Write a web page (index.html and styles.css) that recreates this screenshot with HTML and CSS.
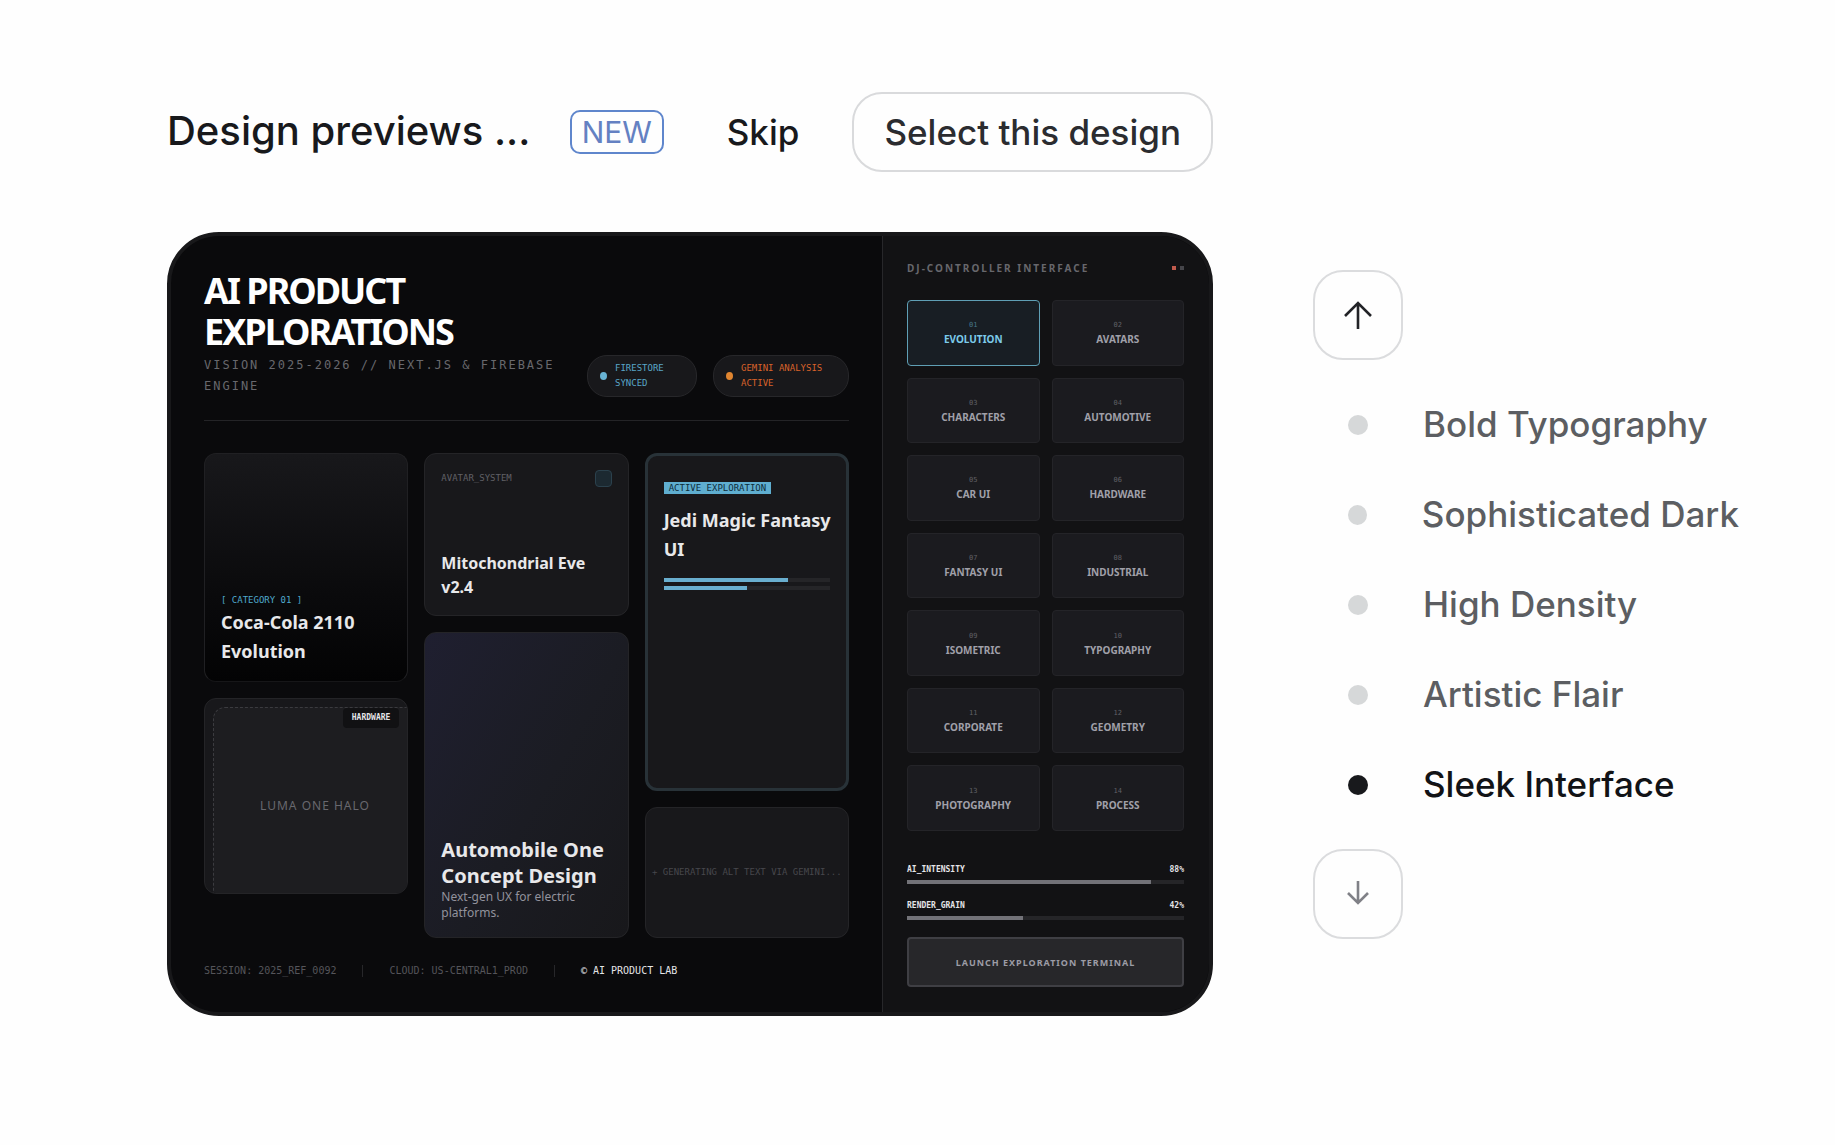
FILE: index.html
```html
<!DOCTYPE html>
<html lang="en">
<head>
<meta charset="utf-8">
<meta name="viewport" content="width=device-width, initial-scale=1">
<title>Design previews</title>
<link rel="stylesheet" href="styles.css">
</head>
<body>
<div class="page">
  <header class="toolbar">
    <h1 class="toolbar-title">Design previews ...</h1>
    <span class="badge">NEW</span>
    <button class="skip" type="button">Skip</button>
    <button class="select" type="button">Select this design</button>
  </header>

  <main class="preview">
    <section class="board">
      <div class="board-head">
        <div class="board-titles">
          <h2 class="board-title">AI PRODUCT EXPLORATIONS</h2>
          <p class="board-sub">VISION 2025-2026 // NEXT.JS &amp; FIREBASE ENGINE</p>
        </div>
        <div class="pill pill-blue"><span class="pill-dot"></span><span>FIRESTORE<br>SYNCED</span></div>
        <div class="pill pill-orange"><span class="pill-dot"></span><span>GEMINI ANALYSIS<br>ACTIVE</span></div>
      </div>

      <div class="cards">
        <div class="cards-col">
          <article class="card card-cola">
            <p class="mono category">[ CATEGORY 01 ]</p>
            <h3 class="card-title">Coca-Cola 2110 Evolution</h3>
          </article>
          <article class="card card-halo">
            <div class="halo">LUMA ONE HALO</div>
            <span class="halo-tag">HARDWARE</span>
          </article>
        </div>
        <div class="cards-col">
          <article class="card card-eve">
            <div class="eve-top"><span class="mono">AVATAR_SYSTEM</span><span class="swatch"></span></div>
            <h3 class="card-title title-small">Mitochondrial Eve v2.4</h3>
          </article>
          <article class="card card-auto">
            <h3 class="card-title title-large">Automobile One Concept Design</h3>
            <p class="auto-note">Next-gen UX for electric platforms.</p>
          </article>
        </div>
        <div class="cards-col">
          <article class="card card-jedi">
            <span class="mono active-tag">ACTIVE EXPLORATION</span>
            <h3 class="card-title">Jedi Magic Fantasy<br>UI</h3>
            <div class="bars">
              <div class="bar bar-blue"><span style="width:75%"></span></div>
              <div class="bar bar-blue"><span style="width:50%"></span></div>
            </div>
          </article>
          <article class="card card-alt"><span class="mono">+ GENERATING ALT TEXT VIA GEMINI...</span></article>
        </div>
      </div>

      <footer class="board-foot">
        <span>SESSION: 2025_REF_0092</span><i class="rule"></i>
        <span>CLOUD: US-CENTRAL1_PROD</span><i class="rule"></i>
        <span class="lab">© AI PRODUCT LAB</span>
      </footer>
    </section>

    <aside class="deck">
      <div class="deck-head">
        <h2 class="deck-title">DJ-CONTROLLER INTERFACE</h2>
        <span class="lights"><i class="light light-red"></i><i class="light"></i></span>
      </div>
      <div class="pads">
        <button class="pad pad-on" type="button"><small>01</small>EVOLUTION</button>
        <button class="pad" type="button"><small>02</small>AVATARS</button>
        <button class="pad" type="button"><small>03</small>CHARACTERS</button>
        <button class="pad" type="button"><small>04</small>AUTOMOTIVE</button>
        <button class="pad" type="button"><small>05</small>CAR UI</button>
        <button class="pad" type="button"><small>06</small>HARDWARE</button>
        <button class="pad" type="button"><small>07</small>FANTASY UI</button>
        <button class="pad" type="button"><small>08</small>INDUSTRIAL</button>
        <button class="pad" type="button"><small>09</small>ISOMETRIC</button>
        <button class="pad" type="button"><small>10</small>TYPOGRAPHY</button>
        <button class="pad" type="button"><small>11</small>CORPORATE</button>
        <button class="pad" type="button"><small>12</small>GEOMETRY</button>
        <button class="pad" type="button"><small>13</small>PHOTOGRAPHY</button>
        <button class="pad" type="button"><small>14</small>PROCESS</button>
      </div>
      <div class="levels">
        <div class="level">
          <div class="level-head"><span>AI_INTENSITY</span><span>88%</span></div>
          <div class="bar"><span style="width:88%"></span></div>
        </div>
        <div class="level">
          <div class="level-head"><span>RENDER_GRAIN</span><span>42%</span></div>
          <div class="bar"><span style="width:42%"></span></div>
        </div>
      </div>
      <button class="launch" type="button">LAUNCH EXPLORATION TERMINAL</button>
    </aside>
  </main>

  <nav class="styles" aria-label="Design styles">
    <button class="step" type="button" aria-label="Previous design">
      <svg width="28" height="28" viewBox="0 0 28 28" fill="none" stroke="currentColor" stroke-width="2.6"><path d="M14 28V2M1 15L14 2L27 15"/></svg>
    </button>
    <div class="options">
      <label class="option"><input type="radio" name="design"><span>Bold Typography</span></label>
      <label class="option"><input type="radio" name="design"><span>Sophisticated Dark</span></label>
      <label class="option"><input type="radio" name="design"><span>High Density</span></label>
      <label class="option"><input type="radio" name="design"><span>Artistic Flair</span></label>
      <label class="option"><input type="radio" name="design" checked><span>Sleek Interface</span></label>
    </div>
    <button class="step step-muted" type="button" aria-label="Next design">
      <svg width="22" height="26" viewBox="0 0 22 26" fill="none" stroke="currentColor" stroke-width="2.6"><path d="M11 0V22M1 12L11 22L21 12"/></svg>
    </button>
  </nav>
</div>
</body>
</html>
```
FILE: styles.css
```css
* { box-sizing: border-box; }

body {
  margin: 0;
  background: #fefefe;
  color: #18191c;
  font-family: Inter, "Liberation Sans", sans-serif;
}

h1, h2, h3, p { margin: 0; }

button {
  margin: 0;
  padding: 0;
  font: inherit;
  color: inherit;
  background: none;
  border: 0;
  cursor: pointer;
}

.page {
  display: grid;
  grid-template-columns: minmax(0, 1fr) 426px;
  column-gap: 100px;
  row-gap: 60px;
  padding: 92px 96px 92px 167px;
}

/* Toolbar */
.toolbar {
  display: flex;
  align-items: center;
}

.toolbar-title {
  flex: 1;
  font-size: 40px;
  font-weight: 500;
  line-height: 46px;
  padding-bottom: 2px;
  white-space: nowrap;
}

.badge {
  display: flex;
  align-items: center;
  justify-content: center;
  width: 94px;
  height: 44px;
  border: 2px solid #5f86cc;
  border-radius: 10px;
  color: #6481c2;
  font-size: 30px;
}

.skip, .select {
  height: 80px;
  font-size: 35px;
  font-weight: 500;
}

.skip { margin: 0 53px 0 63px; }

.select {
  padding: 0 30px;
  border: 2px solid #d9dadc;
  border-radius: 30px;
  color: #2b2c30;
}

/* Preview frame */
.preview {
  grid-column: 1;
  display: grid;
  grid-template-columns: minmax(0, 1fr) 327px;
  min-height: 784px;
  border: 4px solid #18181a;
  border-radius: 52px;
  overflow: hidden;
  background: #0a0a0c;
  color: #e4e4e7;
  font-family: "Noto Sans", "Open Sans", sans-serif;
}

.board {
  display: flex;
  flex-direction: column;
  padding: 34px 33px 31px;
}

.board-head {
  display: flex;
  align-items: flex-end;
  gap: 16px;
  padding-bottom: 23px;
  border-bottom: 1px solid #242427;
}

.board-titles { flex: 1; }

.board-title {
  width: min-content;
  min-width: 260px;
  color: #fff;
  font-size: 36px;
  font-weight: 700;
  line-height: 41px;
  letter-spacing: -2px;
}

.board-sub {
  margin-top: 3px;
  color: #68686d;
  font-family: "DejaVu Sans Mono", monospace;
  font-size: 12px;
  line-height: 21px;
  letter-spacing: 2px;
}

.pill {
  display: flex;
  align-items: center;
  gap: 8px;
  padding: 5px 12px;
  border: 1px solid #27272a;
  border-radius: 20px;
  background: #18181b;
  font-family: "DejaVu Sans Mono", monospace;
  font-size: 9px;
  line-height: 15px;
  white-space: nowrap;
}

.pill-blue { width: 110px; color: #58a6c8; }
.pill-orange { width: 136px; color: #d8622a; }

.pill-dot {
  width: 7px;
  height: 8px;
  border-radius: 50%;
  background: #68b3d4;
}

.pill-orange .pill-dot { background: #e08530; }

/* Cards */
.cards {
  display: grid;
  grid-template-columns: repeat(3, minmax(0, 1fr));
  gap: 16px;
  margin-top: 32px;
}

.cards-col {
  display: flex;
  flex-direction: column;
  gap: 16px;
}

.card {
  display: flex;
  flex-direction: column;
  padding: 16px;
  border: 1px solid #242427;
  border-radius: 12px;
  background: #18181b;
  overflow: hidden;
}

.mono {
  font-family: "DejaVu Sans Mono", monospace;
  font-size: 9px;
  line-height: 15px;
  white-space: nowrap;
}

.card-title {
  color: #e8e8ea;
  font-size: 18px;
  font-weight: 700;
  line-height: 29px;
}

.title-small { font-size: 16px; line-height: 24px; }
.title-large { font-size: 20px; line-height: 26px; }

.card-cola {
  justify-content: flex-end;
  min-height: 229px;
  padding-bottom: 15px;
  border-color: #202023 #202023 #161618;
  background: linear-gradient(#18181b, #0a0a0c 62%, #030304);
}

.category { color: #4fa9cc; }

.card-halo {
  position: relative;
  height: 196px;
  padding: 8px 0 0 8px;
}

.halo {
  display: flex;
  flex: none;
  align-items: center;
  justify-content: center;
  width: 204px;
  height: 196px;
  border: 1px dashed #3b3b3f;
  border-radius: 12px;
  background: #1d1d20;
  color: #68686e;
  font-size: 12px;
  letter-spacing: 1px;
}

.halo-tag {
  position: absolute;
  top: 9px;
  right: 8px;
  padding: 0 9px;
  border-radius: 4px;
  background: #111113;
  font-family: "DejaVu Sans Mono", monospace;
  font-size: 8px;
  font-weight: 700;
  line-height: 20px;
}

.card-eve {
  justify-content: space-between;
  min-height: 163px;
}

.eve-top {
  display: flex;
  align-items: center;
  justify-content: space-between;
  color: #606066;
}

.swatch {
  width: 17px;
  height: 17px;
  border: 1px solid #2b414d;
  border-radius: 4px;
  background: #1c2931;
}

.card-auto {
  justify-content: flex-end;
  min-height: 306px;
  background: linear-gradient(120deg, #1f1f30, #1b1c23 55%, #18181b);
}

.auto-note {
  color: #92929c;
  font-size: 12px;
  line-height: 16px;
}

.card-jedi {
  align-items: flex-start;
  min-height: 338px;
  padding: 26px 16px;
  border: 3px solid #283238;
}

.active-tag {
  padding: 0 5px;
  background: #5faed0;
  color: #0d2c3a;
  line-height: 12px;
}

.card-jedi .card-title {
  margin-top: 12px;
  white-space: nowrap;
}

.bars {
  display: grid;
  gap: 4px;
  width: 100%;
  margin-top: 14px;
}

.bar {
  height: 4px;
  background: #252528;
}

.bar span {
  display: block;
  height: 100%;
  background: #727278;
}

.bar-blue span { background: #69aecf; }

.card-alt {
  align-items: center;
  justify-content: center;
  min-height: 131px;
  padding: 0;
  color: #47474c;
}

/* Board footer */
.board-foot {
  display: flex;
  align-items: center;
  gap: 26px;
  margin-top: 25px;
  color: #55555a;
  font-family: "DejaVu Sans Mono", monospace;
  font-size: 10px;
  line-height: 16px;
}

.rule {
  width: 1px;
  height: 12px;
  background: #27272a;
}

.lab { color: #e4e4e7; }

/* Controller column */
.deck {
  display: flex;
  flex-direction: column;
  padding: 24px 25px 25px 24px;
  border-left: 1px solid #27272a;
  background: #121214;
}

.deck-head {
  display: flex;
  align-items: center;
  justify-content: space-between;
  height: 16px;
}

.deck-title {
  color: #67676c;
  font-size: 10px;
  font-weight: 700;
  letter-spacing: 2px;
}

.lights { display: flex; gap: 4px; }

.light {
  width: 4px;
  height: 4px;
  background: #45454a;
}

.light-red { background: #c05a4c; }

.pads {
  display: grid;
  flex: 1;
  grid-template-columns: 1fr 1fr;
  grid-auto-rows: 1fr;
  gap: 12px;
  margin-top: 24px;
}

.pad {
  display: flex;
  flex-direction: column;
  align-items: center;
  justify-content: center;
  gap: 1px;
  padding-top: 2px;
  border: 1px solid #242428;
  border-radius: 4px;
  background: #1b1b1f;
  color: #a0a0a9;
  font-size: 10px;
  font-weight: 700;
  line-height: 15px;
}

.pad small {
  color: #606066;
  font-family: "DejaVu Sans Mono", monospace;
  font-size: 7px;
  font-weight: 400;
  line-height: 11px;
}

.pad-on {
  border-color: #5f9fb5;
  background: #181e24;
  color: #7ccbea;
}

.pad-on small { color: #477789; }

.levels {
  display: grid;
  gap: 15px;
  margin-top: 32px;
}

.level-head {
  display: flex;
  justify-content: space-between;
  margin-bottom: 4px;
  font-family: "DejaVu Sans Mono", monospace;
  font-size: 8px;
  font-weight: 700;
  line-height: 13px;
}

.launch {
  height: 50px;
  margin-top: 17px;
  border: 2px solid #3f3f44;
  border-radius: 4px;
  background: #27272a;
  color: #9c9ca5;
  font-size: 9px;
  font-weight: 700;
  letter-spacing: 1px;
}

/* Style picker */
.styles {
  padding-top: 38px;
}

.step {
  display: flex;
  align-items: center;
  justify-content: center;
  width: 90px;
  height: 90px;
  border: 2px solid #dbdcde;
  border-radius: 30px;
  color: #222327;
}

.step-muted { color: #808187; }

.options { padding: 20px 0 19px; }

.option {
  display: flex;
  align-items: center;
  gap: 55px;
  height: 90px;
  padding-left: 35px;
  color: #5c5e62;
  font-size: 35px;
  font-weight: 500;
  line-height: 42px;
  white-space: nowrap;
  cursor: pointer;
}

.option span { padding-bottom: 2px; }

.option input {
  appearance: none;
  width: 20px;
  height: 20px;
  margin: 0;
  border-radius: 50%;
  background: #d6d8d9;
}

.option input:checked { background: #18191c; }
.option input:checked + span { color: #121316; }
```
